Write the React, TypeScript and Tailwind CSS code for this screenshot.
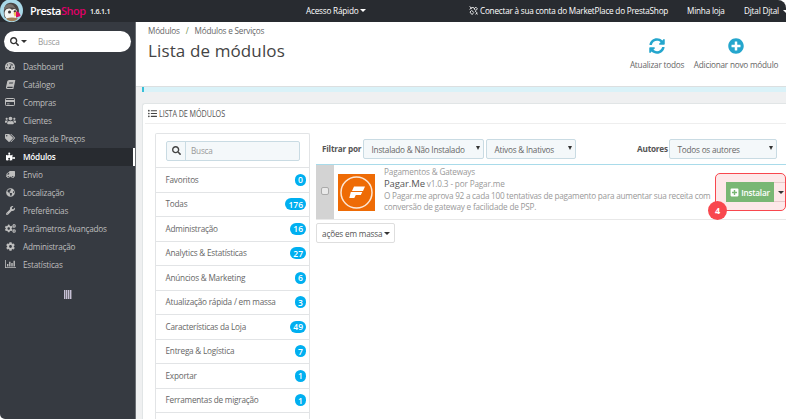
import React from "react";
import {
  FaTachometerAlt, FaBook, FaUsers, FaTags, FaPuzzlePiece, FaTruck,
  FaGlobeAmericas, FaWrench, FaCogs, FaCog, FaSearch,
  FaSyncAlt, FaPlusCircle, FaListUl, FaPlusSquare,
} from "react-icons/fa";

const CardIcon = () => (
  <svg viewBox="0 0 20 16" className="h-[8px] w-[10px]">
    <rect x="1" y="1" width="18" height="14" rx="1.5" fill="none" stroke="currentColor" strokeWidth="2" />
    <rect x="1" y="4" width="18" height="4" fill="currentColor" />
    <rect x="4" y="11" width="5" height="1.6" fill="currentColor" />
  </svg>
);

const StatsIcon = () => (
  <svg viewBox="0 0 22 16" className="h-[8px] w-[11px]" fill="currentColor">
    <path d="M0 0h1.6v14.4H22V16H0zM4 8h2.8v5H4zM8.2 3.5H11V13H8.2zM12.6 6h2.8v7h-2.8zM17 1.5h2.8V13H17z" />
  </svg>
);

const menu: { label: string; icon: React.ReactNode; active?: boolean }[] = [
  { label: "Dashboard", icon: <FaTachometerAlt size={10} /> },
  { label: "Catálogo", icon: <FaBook size={9} className="skew-x-[-12deg]" /> },
  { label: "Compras", icon: <CardIcon /> },
  { label: "Clientes", icon: <FaUsers size={11} /> },
  { label: "Regras de Preços", icon: <FaTags size={10} /> },
  { label: "Módulos", icon: <FaPuzzlePiece size={9} />, active: true },
  { label: "Envio", icon: <FaTruck size={9} className="-scale-x-100" /> },
  { label: "Localização", icon: <FaGlobeAmericas size={9} /> },
  { label: "Preferências", icon: <FaWrench size={9} /> },
  { label: "Parâmetros Avançados", icon: <FaCogs size={11} /> },
  { label: "Administração", icon: <FaCog size={9} /> },
  { label: "Estatísticas", icon: <StatsIcon /> },
];

const categories: [string, string][] = [
  ["Favoritos", "0"],
  ["Todas", "176"],
  ["Administração", "16"],
  ["Analytics & Estatísticas", "27"],
  ["Anúncios & Marketing", "6"],
  ["Atualização rápida / em massa", "3"],
  ["Características da Loja", "49"],
  ["Entrega & Logística", "7"],
  ["Exportar", "1"],
  ["Ferramentas de migração", "1"],
];

const Bird = () => (
  <svg viewBox="0 0 24 24" className="-mt-[1px] h-[24px] w-[24px] shrink-0">
    <circle cx="11.5" cy="11.5" r="11.5" fill="#a9d9e8" />
    <path d="M5 19C3 15 3 5 9 4c6-1.500 10 3 10 8l-1 6z" fill="#4a4543" />
    <path d="M5 12c2-3 5-3 7-1 2-2 4-1 5 1l-1 7c-3 2-7 2-10 0-1.500-2-2-5-1-7z" fill="#f6f6f3" />
    <path d="M4 9c2-4 6-5 9-3l3 4c-4-2-8-2-12 1z" fill="#77716c" />
    <circle cx="9.500" cy="13" r="1.500" fill="#3c3939" />
    <circle cx="15" cy="12.500" r="1.300" fill="#3c3939" />
    <path d="M13.500 14l2.500-1.500.500 4-2 1z" fill="#eac65a" />
    <path d="M16 12.500c2.500-.500 4.500 2 4.500 4.500L16 18.500z" fill="#de1262" />
    <path d="M6 19.500c4-1.500 8-1.500 12 0-2 3-9 4-12 0z" fill="#a08058" />
  </svg>
);

const Caret = ({ className }: { className: string }) => (
  <span className={`h-0 w-0 shrink-0 border-x-[3px] border-t-[3px] border-x-transparent ${className}`} />
);

const Select = ({ label, className }: { label: string; className: string }) => (
  <div className={`flex h-[20px] shrink-0 items-center justify-between rounded-[2px] border border-[#c9dbe3] bg-[#f4f8fa] pr-[3px] pl-[7.5px] text-[#666] ${className}`}>
    <span>{label}</span>
    <span className="mb-[2px] h-0 w-0 border-x-[2.5px] border-t-[4px] border-x-transparent border-t-[#333]" />
  </div>
);

export default function App() {
  return (
    <div className="relative flex h-[420px] w-[786px] flex-col overflow-hidden whitespace-nowrap bg-white pb-px font-['Open_Sans',sans-serif] text-[8.2px] leading-[11px] tracking-[-0.21px] text-[#666]">
      <header className="flex h-[22px] shrink-0 items-center rounded-tr-[8px] bg-[#282b30] font-medium text-white">
        <Bird />
        <div className="ml-[6px] w-[56px] shrink-0 text-[11px] font-semibold leading-[14px] tracking-[-0.5px]">
          <span>Presta</span><span className="text-[#df0067]">Shop</span>
        </div>
        <span className="ml-[4px] mt-[1px] w-[216px] shrink-0 text-[7px] font-semibold">1.6.1.1</span>
        <div className="flex w-[163px] shrink-0 items-center pb-px">
          <span>Acesso Rápido</span>
          <Caret className="ml-[2px] border-t-white" />
        </div>
        <svg viewBox="0 0 16 16" className="-mt-[2px] h-[9px] w-[9px] shrink-0" fill="none" stroke="white" strokeWidth="1.600">
          <path d="M1 1l4 3 2-2 3 3M1 6l4-3M4 7l5 5M3 9l-1 2 3 4 3-2M9 5l3-3 3 3-3 3-3-3M11 9l3 3-2 3M14 13l1 2" />
        </svg>
        <span className="ml-[2px] w-[207px] shrink-0 pb-px tracking-[-0.23px]">Conectar à sua conta do MarketPlace do PrestaShop</span>
        <span className="w-[57px] shrink-0 pb-px">Minha loja</span>
        <span className="shrink-0 pb-px">Djtal Djtal</span>
        <Caret className="ml-[4px] border-t-white" />
      </header>

      <div className="flex min-h-0 flex-1">
        <aside className="flex w-[136px] shrink-0 flex-col rounded-bl-[5px] border-r border-[#6c7075] bg-[#363a41] pt-[9px]">
          <div className="ml-[4px] flex h-[21px] w-[127px] shrink-0 items-center rounded-full bg-white pl-[6px] text-[#999]">
            <FaSearch size={9} className="text-[#333]" />
            <Caret className="ml-[2px] border-t-[#333]" />
            <span className="ml-[11px] pb-px">Busca</span>
          </div>
          <nav className="mt-[6px] flex flex-col">
            {menu.map((m) => (
              <div
                key={m.label}
                className={
                  m.active
                    ? "flex h-[18px] items-center border-r-2 border-white bg-[#282b30] pb-[2px] font-semibold text-white"
                    : "flex h-[18px] items-center pb-[2px] text-[#bebebe]"
                }
              >
                <span className="ml-[4px] mr-[7px] flex w-[12px] justify-center">{m.icon}</span>
                <span>{m.label}</span>
              </div>
            ))}
          </nav>
          <div className="mt-[16px] ml-[64px] flex h-[9px] w-[8px] gap-px bg-[#77747f]">
            {[0, 1, 2, 3].map((i) => (
              <span key={i} className="h-[9px] w-px bg-[#c5c0d5]" />
            ))}
          </div>
        </aside>

        <main className="flex min-w-0 flex-1 flex-col bg-[#eff0f1]">
          <section className="flex h-[65px] shrink-0 border-b border-[#dcdfe0] bg-white pl-[12px]">
            <div className="flex-1 pt-[3px]">
              <div className="flex">
                <span>Módulos</span>
                <span className="mx-[6px] text-[#72914f]">/</span>
                <span>Módulos e Serviços</span>
              </div>
              <h1 className="mt-[3px] text-[17px] leading-[24px] tracking-[0.12px] text-[#444]">Lista de módulos</h1>
            </div>
            <div className="flex pt-[16px] pr-[8px]">
              <div className="mr-[10px] flex w-[54px] flex-col items-center">
                <FaSyncAlt size={16} className="text-[#25a6cd]" />
                <span className="mt-[5px]">Atualizar todos</span>
              </div>
              <div className="flex w-[84px] flex-col items-center">
                <FaPlusCircle size={16} className="text-[#25a6cd]" />
                <span className="mt-[5px]">Adicionar novo módulo</span>
              </div>
            </div>
          </section>
          <div className="ml-[6px] h-[5px] shrink-0 border-l-2 border-[#36bfd8] bg-[#daf2f8]" />
          <section className="mt-[11px] ml-[6px] flex min-h-0 flex-1 flex-col rounded-tl-[3px] border-t border-l border-[#e1e5e6] bg-white">
            <h2 className="ml-[2px] flex h-[20px] shrink-0 items-center border-b border-[#eee] pl-[3px]">
              <FaListUl size={9} className="text-[#444]" />
              <span className="ml-[2px] w-[90px] origin-left scale-x-[0.76] text-[9.500px] tracking-[-0.1px] text-[#555]">LISTA DE MÓDULOS</span>
            </h2>
            <div className="flex min-h-0 flex-1 pl-[12px]">
              <div className="mt-[9px] flex w-[155px] shrink-0 flex-col overflow-hidden rounded-t-[2px] border border-b-0 border-[#e2e4e6]">
                <div className="flex h-[33px] shrink-0 items-center pl-[10px]">
                  <div className="flex h-[20px] w-[134px] rounded-[2px] border border-[#c9dbe3] bg-[#f4f8fa]">
                    <span className="flex w-[19px] items-center justify-center border-r border-[#c9dbe3]">
                      <FaSearch size={9} className="text-[#444]" />
                    </span>
                    <span className="flex items-center pl-[5px] text-[#999]">Busca</span>
                  </div>
                </div>
                {categories.map(([name, n]) => (
                  <div key={name} className="flex h-[24.5px] shrink-0 items-center justify-between border-t border-[#e2e4e6] pr-[3px] pl-[9.500px]">
                    <span className="pb-px">{name}</span>
                    <span className="flex h-[12px] min-w-[11px] items-center justify-center rounded-full bg-[#00aff0] px-[3px] text-[8.5px] font-semibold tracking-normal text-white">{n}</span>
                  </div>
                ))}
                <div className="h-[20px] shrink-0 border-t border-[#e2e4e6]" />
              </div>

              <div className="ml-[6px] min-w-0 flex-1 pt-[15px]">
                <div className="flex items-center pl-[6px]">
                  <span className="w-[41px] shrink-0 pb-px font-bold tracking-[-0.2px] text-[#555]">Filtrar por</span>
                  <Select label="Instalado & Não Instalado" className="w-[121px]" />
                  <Select label="Ativos & Inativos" className="ml-[2px] w-[90px]" />
                  <span className="ml-[61px] w-[32px] shrink-0 pb-px font-bold tracking-[-0.2px] text-[#555]">Autores</span>
                  <Select label="Todos os autores" className="w-[108px]" />
                </div>
                <div className="mt-[5px] flex h-[56px] border-t border-b border-t-[#a9dbea] border-b-[#e8e8e8]">
                  <div className="flex w-[18px] shrink-0 items-center justify-center bg-[#d3d3d3] pb-[2px]">
                    <span className="h-[8px] w-[8px] rounded-[2px] border border-[#aaa] bg-[#e9e9e9]" />
                  </div>
                  <svg viewBox="0 0 37 37" className="mt-[9px] ml-[4px] h-[37px] w-[37px] shrink-0">
                    <rect width="37" height="37" fill="#ee6b05" />
                    <circle cx="18.500" cy="18.500" r="15.500" fill="none" stroke="#fde7d5" strokeWidth="1.500" />
                    <path d="M16 12.500h11l-2 4.500H14zM12.800 18h11.500l-1.500 3h-5l-1.500 3h-5z" fill="white" />
                  </svg>
                  <div className="ml-[9px] w-[330px] pt-px text-[#999]">
                    <div className="tracking-[-0.17px]">Pagamentos & Gateways</div>
                    <div className="leading-[13px] tracking-[-0.15px]"><span className="text-[9.500px] tracking-[-0.1px] text-[#555]">Pagar.Me</span> v1.0.3 - por Pagar.me</div>
                    <div className="tracking-[-0.235px]">O Pagar.me aprova 92 a cada 100 tentativas de pagamento para aumentar sua receita com</div>
                    <div className="tracking-[-0.2px]">conversão de gateway e facilidade de PSP.</div>
                  </div>
                </div>
                <div className="mt-[3px] flex h-[20px] w-[79px] items-center rounded-[2px] border border-[#dedede] pl-[5px] text-[#555]">
                  <span className="tracking-[-0.17px]">ações em massa</span>
                  <Caret className="ml-[2px] border-t-[#333]" />
                </div>
              </div>
            </div>
          </section>
        </main>
      </div>

      <div className="absolute top-[173px] left-[715px] flex h-[38px] w-[71px] items-center rounded-[5px] border border-[#f8474e] bg-[#fde8e9] pl-[10px]">
        <div className="flex h-[20px] w-[48px] items-center justify-center gap-[2px] bg-[#79b774] font-semibold text-white">
          <FaPlusSquare size={9} />
          <span>Instalar</span>
        </div>
        <div className="flex h-[20px] flex-1 items-center justify-center border-y border-[#e8c9ca] pl-[2px]">
          <Caret className="border-t-[#333]" />
        </div>
      </div>
      <div className="absolute top-[201px] left-[708px] flex h-[19px] w-[19px] items-center justify-center rounded-full bg-[#f8474e] text-[9px] font-bold text-white">4</div>
    </div>
  );
}
